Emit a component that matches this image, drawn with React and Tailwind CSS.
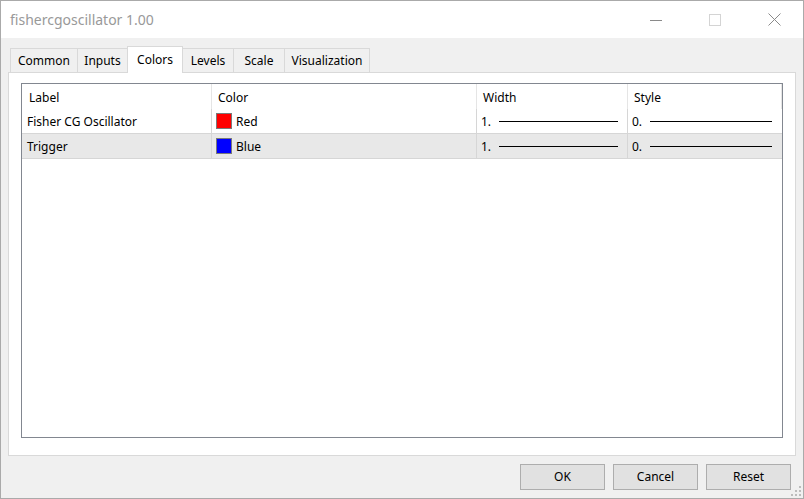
import React from "react";

const font = { fontFamily: '"Noto Sans", "Open Sans", sans-serif' };

function Tab({ label, active, w }) {
  if (active) {
    return (
      <div
        className={`relative z-10 -ml-px -mb-px h-[27px] ${w} flex items-start justify-center pt-[4px] bg-white border-t border-l border-r border-[#d9d9d9] text-[12px] text-black`}
      >
        {label}
      </div>
    );
  }
  return (
    <div
      className={`-ml-px h-[24px] ${w} flex items-center justify-center pt-[1px] bg-[#f0f0f0] border-t border-l border-r border-[#d9d9d9] text-[12px] text-black first:ml-0`}
    >
      {label}
    </div>
  );
}

function Row({ label, color, colorName, bg }) {
  return (
    <div className={`flex h-[25px] border-b border-[#d6d6d6] ${bg} text-[12px] text-black`}>
      <div className="w-[190px] shrink-0 h-full flex items-center pt-[2px] pl-[5px] border-r border-[#d6d6d6]">{label}</div>
      <div className="w-[265px] shrink-0 h-full flex items-center pl-[4px] border-r border-[#d6d6d6]">
        <div className={`w-[16px] h-[16px] border border-[#7a7a7a] ${color}`} />
        <span className="ml-[4px] pt-[2px]">{colorName}</span>
      </div>
      <div className="w-[151px] shrink-0 h-full flex items-center pl-[4px] border-r border-[#d6d6d6]">
        <span className="pt-[2px]">1.</span>
        <div className="ml-[8px] flex-1 h-px bg-black mr-[9px]" />
      </div>
      <div className="flex-1 h-full flex items-center pl-[4px]">
        <span className="pt-[2px]">0.</span>
        <div className="ml-[8px] flex-1 h-px bg-black mr-[10px]" />
      </div>
    </div>
  );
}

export default function App() {
  return (
    <div
      style={font}
      className="relative w-[804px] h-[499px] border border-[#aaaaaa] bg-[#f0f0f0] flex flex-col overflow-hidden"
    >
      {/* Title bar */}
      <div className="h-[37px] bg-white flex items-center shrink-0">
        <div className="pl-[9px] text-[14px] text-[#999999]">fishercgoscillator 1.00</div>
        <div className="ml-auto flex h-full">
          <div className="w-[58px] h-full flex items-center justify-center">
            <svg width="12" height="12" viewBox="0 0 12 12">
              <line x1="0" y1="6.5" x2="12" y2="6.5" stroke="#8a8a8a" strokeWidth="1" />
            </svg>
          </div>
          <div className="w-[60px] h-full flex items-center justify-center">
            <svg width="12" height="12" viewBox="0 0 12 12">
              <rect x="0.5" y="0.5" width="11" height="11" fill="none" stroke="#d4d4d4" strokeWidth="1" />
            </svg>
          </div>
          <div className="w-[58px] h-full flex items-center justify-center">
            <svg width="13" height="13" viewBox="0 0 13 13">
              <line x1="0.5" y1="0.5" x2="12.5" y2="12.5" stroke="#8a8a8a" strokeWidth="1" />
              <line x1="12.5" y1="0.5" x2="0.5" y2="12.5" stroke="#8a8a8a" strokeWidth="1" />
            </svg>
          </div>
        </div>
      </div>

      {/* Body */}
      <div className="flex-1 flex flex-col px-[7px] pt-[8px]">
        {/* Tabs */}
        <div className="h-[26px] flex items-end pl-[2px] shrink-0">
          <Tab label="Common" w="w-[68px]" />
          <Tab label="Inputs" w="w-[51px]" />
          <Tab label="Colors" w="w-[56px]" active />
          <Tab label="Levels" w="w-[52px]" />
          <Tab label="Scale" w="w-[52px]" />
          <Tab label="Visualization" w="w-[86px]" />
        </div>

        {/* Panel */}
        <div className="h-[384px] shrink-0 border border-[#d9d9d9] bg-white pt-[10px] px-[12px] pb-[17px] flex flex-col">
          <div className="flex-1 border border-[#828790] bg-white flex flex-col">
            {/* Header */}
            <div className="flex h-[25px] text-[12px] text-black">
              <div className="w-[190px] shrink-0 h-full flex items-center pt-[2px] pl-[7px] border-r border-[#e5e5e5]">Label</div>
              <div className="w-[265px] shrink-0 h-full flex items-center pt-[2px] pl-[6px] border-r border-[#e5e5e5]">Color</div>
              <div className="w-[151px] shrink-0 h-full flex items-center pt-[2px] pl-[6px] border-r border-[#e5e5e5]">Width</div>
              <div className="w-[154px] shrink-0 h-full flex items-center pt-[2px] pl-[6px] border-r border-[#e5e5e5]">Style</div>
            </div>
            <Row label="Fisher CG Oscillator" color="bg-[#ff0000]" colorName="Red" bg="bg-white" />
            <Row label="Trigger" color="bg-[#0000ff]" colorName="Blue" bg="bg-[#e8e8e8]" />
          </div>
        </div>

        {/* Buttons */}
        <div className="flex justify-end gap-[8px] mt-[8px] pr-[5px]">
          {["OK", "Cancel", "Reset"].map((b) => (
            <div
              key={b}
              className="w-[85px] h-[26px] flex items-center justify-center bg-[#e1e1e1] border border-[#adadad] text-[12px] text-black"
            >
              {b}
            </div>
          ))}
        </div>
      </div>

      {/* Resize grip */}
      <svg className="absolute right-[2px] bottom-[2px]" width="10" height="10" viewBox="0 0 10 10">
        <rect x="8" y="0" width="2" height="2" fill="#bcbcbc" />
        <rect x="4" y="4" width="2" height="2" fill="#bcbcbc" />
        <rect x="8" y="4" width="2" height="2" fill="#bcbcbc" />
        <rect x="0" y="8" width="2" height="2" fill="#bcbcbc" />
        <rect x="4" y="8" width="2" height="2" fill="#bcbcbc" />
        <rect x="8" y="8" width="2" height="2" fill="#bcbcbc" />
      </svg>
    </div>
  );
}
